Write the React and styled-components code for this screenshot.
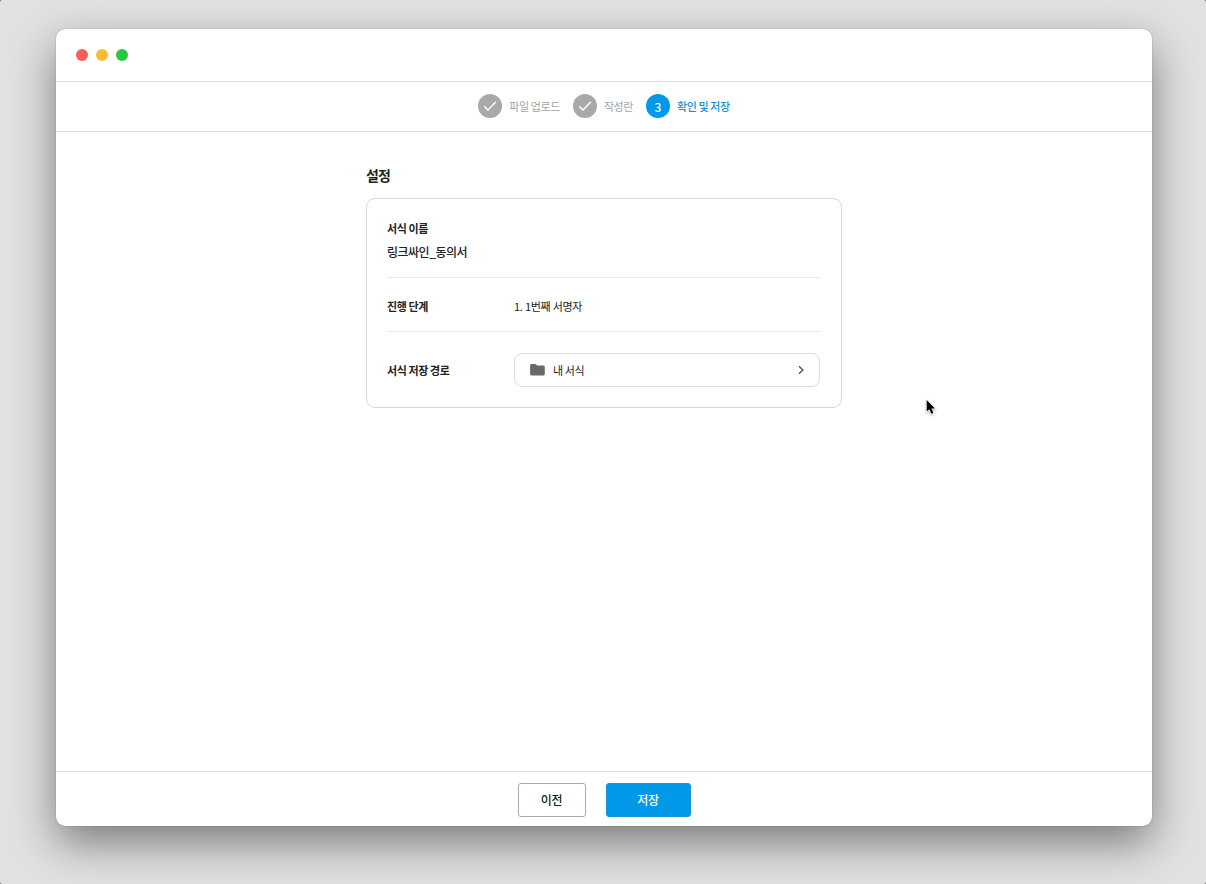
import React from 'react';
import styled, { createGlobalStyle } from 'styled-components';

const GlobalStyle = createGlobalStyle`
  * {
    box-sizing: border-box;
  }

  body {
    margin: 0;
    background: #555;
    font-family: 'Noto Sans CJK KR', 'Noto Sans', sans-serif;
    color: #222;
    overflow: hidden;
  }
`

const Desktop = styled.div`
  position: relative;
  width: 1206px;
  height: 884px;
  padding: 29px 54px 58px 56px;
  background: #e1e1e1;
  border-radius: 2px;
`

const Window = styled.div`
  display: flex;
  flex-direction: column;
  width: 1096px;
  height: 797px;
  background: #fff;
  border-radius: 9px;
  box-shadow: 0 0 1px rgba(0, 0, 0, 0.5), 0 17px 44px rgba(0, 0, 0, 0.45);
`

const TitleBar = styled.div`
  display: flex;
  align-items: center;
  gap: 8px;
  height: 53px;
  padding-left: 20px;
  border-bottom: 1px solid #dcdcdc;
`

const Light = styled.span`
  width: 12px;
  height: 12px;
  border-radius: 50%;
  background: ${({ color }) => color};
`

const Steps = styled.div`
  display: flex;
  justify-content: center;
  align-items: center;
  gap: 13px;
  height: 50px;
  padding-bottom: 1px;
  border-bottom: 1px solid #dcdcdc;
`

const Step = styled.div`
  display: flex;
  align-items: center;
  gap: 7px;
  font-size: 11px;
  letter-spacing: -0.42px;
  color: ${({ $active }) => ($active ? '#1a8fd0' : '#a3a3a3')};
  font-weight: ${({ $active }) => ($active ? 500 : 400)};
`

const StepMark = styled.span`
  display: flex;
  justify-content: center;
  align-items: center;
  width: 24px;
  height: 24px;
  border-radius: 50%;
  color: #fff;
  font-size: 12px;
  letter-spacing: 0;
  background: ${({ $active }) => ($active ? '#0099e9' : '#a9a9a9')};
`

const Content = styled.main`
  flex: 1;
  width: 476px;
  margin: 0 auto;
  padding-top: 33px;
`

const Title = styled.h1`
  margin: 0 0 13px;
  font-size: 14px;
  line-height: 20px;
  font-weight: 700;
  letter-spacing: -0.8px;
`

const Card = styled.section`
  height: 210px;
  padding: 0 21px 0 20px;
  border: 1px solid #d8d8d8;
  border-radius: 9px;
`

const Row = styled.div`
  display: flex;
  align-items: center;
  height: ${({ $height }) => $height}px;
  padding-top: ${({ $last }) => ($last ? 0 : 2)}px;
  border-bottom: ${({ $last }) => ($last ? 'none' : '1px solid #ebebeb')};
`

const NameRow = styled.div`
  height: 79px;
  padding-top: 19px;
  border-bottom: 1px solid #ebebeb;
`

const Label = styled.div`
  width: 127px;
  font-size: 11px;
  line-height: 20px;
  font-weight: 700;
  letter-spacing: -0.4px;
  white-space: nowrap;
`

const Name = styled.div`
  margin-top: 4px;
  font-size: 12px;
  line-height: 20px;
  font-weight: 500;
  letter-spacing: -0.5px;
`

const Value = styled.div`
  font-size: 11px;
  line-height: 20px;
  letter-spacing: -0.4px;
  word-spacing: 0.6px;
`

const PathSelect = styled.button`
  display: flex;
  align-items: center;
  flex: 1;
  height: 34px;
  padding: 0 15px;
  border: 1px solid #dcdcdc;
  border-radius: 8px;
  background: #fff;
  color: #222;
  font-family: inherit;
  font-size: 11px;
  letter-spacing: -0.4px;
`

const PathName = styled.span`
  flex: 1;
  margin-left: 8px;
  text-align: left;
`

const Footer = styled.footer`
  display: flex;
  justify-content: center;
  align-items: center;
  gap: 20px;
  height: 55px;
  padding: 1px 0 0;
  border-top: 1px solid #e0e0e0;
`

const Button = styled.button`
  width: ${({ $primary }) => ($primary ? 85 : 68)}px;
  height: 34px;
  padding: 0 0 1px;
  border: 1px solid ${({ $primary }) => ($primary ? '#1c93d2' : '#ababab')};
  border-radius: 3px;
  background: ${({ $primary }) => ($primary ? '#0099e9' : '#fff')};
  color: ${({ $primary }) => ($primary ? '#fff' : '#222')};
  font-family: inherit;
  font-size: 12px;
  font-weight: 500;
  letter-spacing: -0.4px;
`

const Pointer = styled.svg`
  position: absolute;
  left: 924px;
  top: 397px;
  filter: drop-shadow(0 1px 1px rgba(0, 0, 0, 0.3));
`

const CheckIcon = () => (
  <svg width='14' height='12' viewBox='0 0 14 12' fill='none'>
    <path d='M1.2 6.2L5 10L12.9 1.8' stroke='#fff' strokeWidth='1.4' />
  </svg>
)

const FolderIcon = () => (
  <svg width='15' height='12' viewBox='0 0 15 12'>
    <path
      d='M1.5 0H5.6L7.1 1.5H13.4Q14.8 1.5 14.8 2.9V10.1Q14.8 11.5 13.4 11.5H1.5Q0.1 11.5 0.1 10.1V1.4Q0.1 0 1.5 0Z'
      fill='#696969'
    />
  </svg>
)

const ChevronIcon = () => (
  <svg width='6' height='10' viewBox='0 0 6 10' fill='none'>
    <path d='M1 1.2L4.9 5L1 8.8' stroke='#555' strokeWidth='1.4' />
  </svg>
)

const steps = ['파일 업로드', '작성란', '확인 및 저장'];

const App = () => {
  const current = 2;

  return (
    <>
      <GlobalStyle />
      <Desktop>
        <Window>
          <TitleBar>
            <Light color='#f95e57' />
            <Light color='#fbbc2f' />
            <Light color='#29c840' />
          </TitleBar>
          <Steps>
            {steps.map((step, index) => (
              <Step key={step} $active={index === current}>
                <StepMark $active={index === current}>
                  {index < current ? <CheckIcon /> : index + 1}
                </StepMark>
                {step}
              </Step>
            ))}
          </Steps>
          <Content>
            <Title>설정</Title>
            <Card>
              <NameRow>
                <Label>서식 이름</Label>
                <Name>링크싸인_동의서</Name>
              </NameRow>
              <Row $height={54}>
                <Label>진행 단계</Label>
                <Value>1. 1번째 서명자</Value>
              </Row>
              <Row $height={75} $last>
                <Label>서식 저장 경로</Label>
                <PathSelect>
                  <FolderIcon />
                  <PathName>내 서식</PathName>
                  <ChevronIcon />
                </PathSelect>
              </Row>
            </Card>
          </Content>
          <Footer>
            <Button>이전</Button>
            <Button $primary>저장</Button>
          </Footer>
        </Window>
        <Pointer width='14' height='19' viewBox='0 0 14 19'>
          <path
            d='M2.7 3V14.6L5.3 12.2L7.3 16.8L9.4 15.9L7.5 11.4H11Z'
            fill='#000'
            stroke='#fff'
            strokeWidth='1.4'
            paintOrder='stroke'
          />
        </Pointer>
      </Desktop>
    </>
  );
}

export default App;
